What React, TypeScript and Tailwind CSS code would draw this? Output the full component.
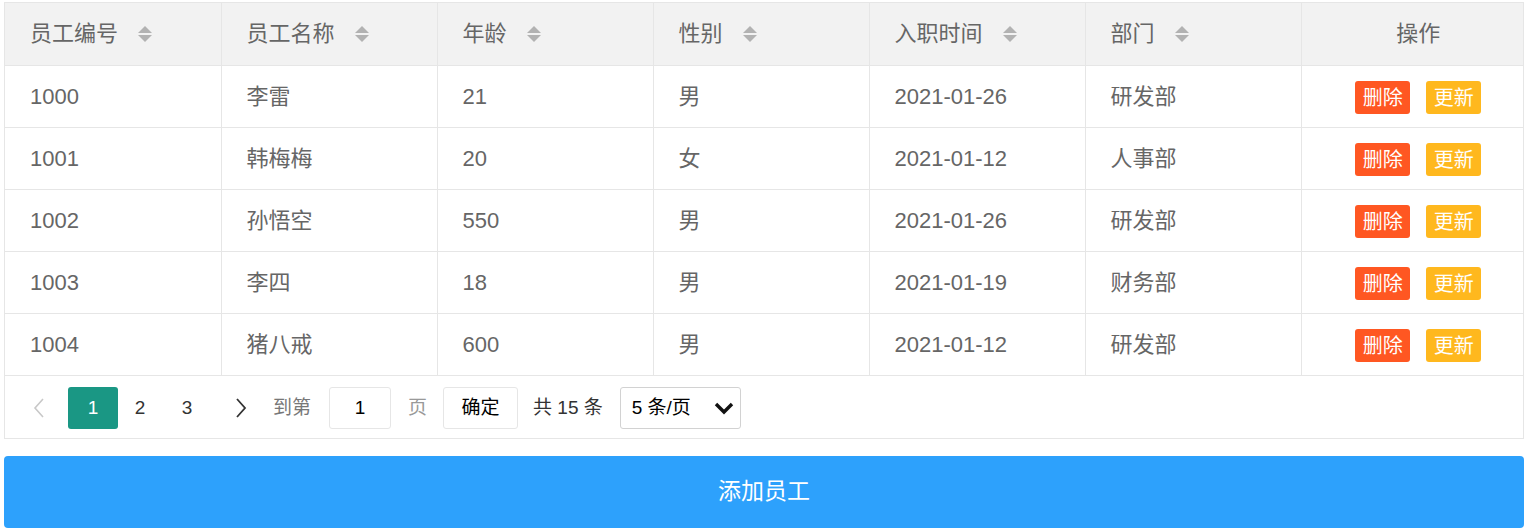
import React from 'react';

interface Employee {
  id: string;
  name: string;
  age: string;
  gender: string;
  joined: string;
  dept: string;
}

const employees: Employee[] = [
  { id: '1000', name: '李雷', age: '21', gender: '男', joined: '2021-01-26', dept: '研发部' },
  { id: '1001', name: '韩梅梅', age: '20', gender: '女', joined: '2021-01-12', dept: '人事部' },
  { id: '1002', name: '孙悟空', age: '550', gender: '男', joined: '2021-01-26', dept: '研发部' },
  { id: '1003', name: '李四', age: '18', gender: '男', joined: '2021-01-19', dept: '财务部' },
  { id: '1004', name: '猪八戒', age: '600', gender: '男', joined: '2021-01-12', dept: '研发部' },
];

const columns = ['员工编号', '员工名称', '年龄', '性别', '入职时间', '部门'];

const SortIcon: React.FC = () => (
  <svg width="16" height="20" viewBox="0 0 16 20" className="ml-[19px] shrink-0">
    <polygon points="8,2 15,9 1,9" fill="#b2b2b2" />
    <polygon points="1,11 15,11 8,18" fill="#b2b2b2" />
  </svg>
);

const App: React.FC = () => {
  return (
    <div
      className="pl-[4px] pt-[2px] bg-white min-h-[532px]"
      style={{ fontFamily: '"Liberation Sans", "Noto Sans CJK SC", sans-serif' }}
    >
      <div className="w-[1520px] border border-[#e6e6e6]">
        <table className="w-full table-fixed border-collapse">
          <colgroup>
            <col className="w-[216px]" />
            <col className="w-[216px]" />
            <col className="w-[216px]" />
            <col className="w-[216px]" />
            <col className="w-[216px]" />
            <col className="w-[216px]" />
            <col />
          </colgroup>
          <thead>
            <tr className="h-[62px] bg-[#f2f2f2]">
              {columns.map((col) => (
                <th
                  key={col}
                  className="border-r border-b border-[#e6e6e6] pl-[25px] text-left font-normal text-[22px] text-[#666]"
                >
                  <div className="flex items-center">
                    <span>{col}</span>
                    <SortIcon />
                  </div>
                </th>
              ))}
              <th className="border-b border-[#e6e6e6] pl-[12px] text-center font-normal text-[22px] text-[#666]">
                操作
              </th>
            </tr>
          </thead>
          <tbody>
            {employees.map((e) => (
              <tr key={e.id} className="h-[62px]">
                {[e.id, e.name, e.age, e.gender, e.joined, e.dept].map((v, i) => (
                  <td
                    key={i}
                    className="border-r border-b border-[#e6e6e6] pl-[25px] text-[22px] text-[#666]"
                  >
                    {v}
                  </td>
                ))}
                <td className="border-b border-[#e6e6e6] pl-[12px]">
                  <div className="flex items-center justify-center gap-[16px] pt-[3px]">
                    <span className="flex h-[33px] w-[55px] items-center justify-center rounded-[3px] bg-[#ff5722] text-[20px] text-white">
                      删除
                    </span>
                    <span className="flex h-[33px] w-[55px] items-center justify-center rounded-[3px] bg-[#ffb81e] text-[20px] text-white">
                      更新
                    </span>
                  </div>
                </td>
              </tr>
            ))}
          </tbody>
        </table>

        <div className="flex h-[62px] items-center pl-[12px] pt-[3px] text-[19px]">
          <span className="flex h-[42px] w-[44px] items-center justify-center">
            <svg width="14" height="22" viewBox="0 0 14 22">
              <polyline points="11,2 3,11 11,20" fill="none" stroke="#c8c8c8" strokeWidth="1.6" />
            </svg>
          </span>
          <span className="ml-[7px] flex h-[42px] w-[50px] items-center justify-center rounded-[3px] bg-[#1a9784] text-white">
            1
          </span>
          <span className="flex h-[42px] w-[44px] items-center justify-center text-[#333]">2</span>
          <span className="flex h-[42px] w-[50px] items-center justify-center text-[#333]">3</span>
          <span className="flex h-[42px] w-[58px] items-center justify-center">
            <svg width="14" height="22" viewBox="0 0 14 22">
              <polyline points="3,2 11,11 3,20" fill="none" stroke="#333" strokeWidth="1.8" />
            </svg>
          </span>
          <span className="ml-[3px] text-[#777]">到第</span>
          <span className="ml-[18px] flex h-[42px] w-[62px] items-center justify-center rounded-[3px] border border-[#e6e6e6] text-black">
            1
          </span>
          <span className="ml-[17px] text-[#999]">页</span>
          <span className="ml-[16px] flex h-[42px] w-[75px] items-center justify-center rounded-[3px] border border-[#e6e6e6] text-black">
            确定
          </span>
          <span className="ml-[15px] text-[#333]">共 15 条</span>
          <span className="ml-[17px] flex h-[42px] w-[121px] items-center justify-between rounded-[3px] border border-[#d2d2d2] pl-[11px] pr-[6px] text-black">
            <span>5 条/页</span>
            <svg width="20" height="13" viewBox="0 0 20 13">
              <polyline points="2,2 10,10 18,2" fill="none" stroke="#111" strokeWidth="3.4" />
            </svg>
          </span>
        </div>
      </div>

      <button className="mt-[17px] flex h-[72px] w-[1520px] items-center justify-center rounded-[4px] bg-[#2da1fc] text-[23px] text-white">
        添加员工
      </button>
    </div>
  );
};

export default App;
